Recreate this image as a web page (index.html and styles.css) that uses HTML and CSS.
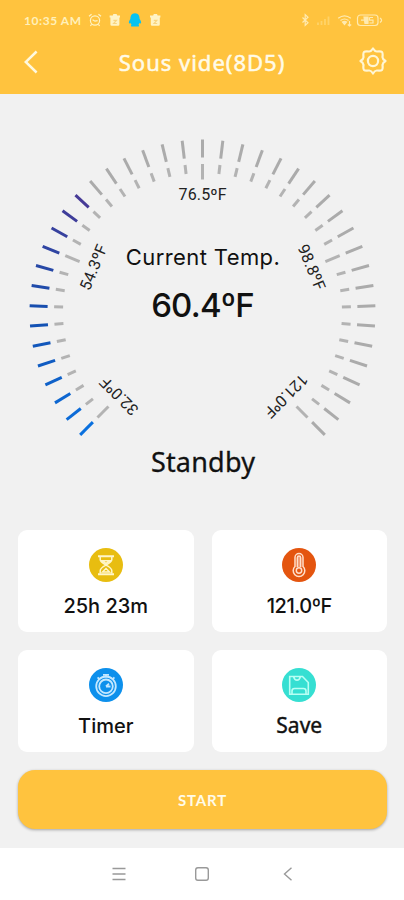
FILE: index.html
```html
<!DOCTYPE html>
<html lang="en">
<head>
<meta charset="utf-8">
<title>Sous vide</title>
<link rel="stylesheet" href="styles.css">
</head>
<body>
<div class="screen">
  <header class="header">
    <div class="status">
      <span class="clock">10:35 AM</span>
      <svg class="status-left" width="76" height="16" viewBox="0 0 76 16" fill="none" stroke="#fff3c4" stroke-width="1.2">
        <circle cx="7" cy="8.5" r="4.6"/><path d="M4.6 7.8 7 9.2l2.6-.6M1 4.3l2.6-2M13 4.3l-2.6-2M3.6 12.4l-1.2 1.4M10.4 12.4l1.2 1.4"/>
        <path fill="#fff3c4" stroke="none" d="M21.600 3.600h3.200l.6-1.600h3.200l.6 1.600h2.800v2H21.600zM22.400 5.400h9v7.100a1.300 1.300 0 0 1-1.300 1.300h-6.400a1.300 1.300 0 0 1-1.300-1.300z"/><path stroke="#f8d480" d="M25.400 8.300h3l-2.800 3.200h3.200"/>
        <path fill="#08c3f2" stroke="none" d="M47 1.200c3.600 0 4.600 2.800 4.600 5.800 1 1.300 1.900 3 1.400 4.300-.3.700-1 .1-1.400-.5-.2 1-.7 1.600-1.200 2 .8.400 1 1.500.1 1.700h-7c-.9-.2-.7-1.300.1-1.700-.5-.4-1-1-1.200-2-.4.600-1.100 1.200-1.400.5-.5-1.300.4-3 1.400-4.300 0-3 1-5.800 4.600-5.800z"/>
        <path fill="#fff3c4" stroke="none" d="M62 3.600h3.200l.6-1.600H69l.6 1.600h2.800v2H62zM62.800 5.400h9v7.100a1.300 1.300 0 0 1-1.300 1.300h-6.400a1.300 1.300 0 0 1-1.300-1.300z"/><path stroke="#f8d480" d="M65.800 8.300h3L66 11.500h3.200"/>
      </svg>
      <svg class="status-right" width="84" height="16" viewBox="0 0 84 16" fill="none" stroke="#ffeab0" stroke-width="1.200">
        <path d="M2.500 5.500 8 10.700 5.200 13.400V2.600L8 5.300 2.500 10.500"/>
        <path stroke="#ffd368" stroke-width="1.800" d="M18 13v-2.500M21.500 13V9M25 13V7M28.500 13V4.500"/>
        <path d="M38.200 6.300q6.300-5 12.600 0M40.500 8.500q4-3 8 0"/><path fill="#ffeab0" d="M42.400 9.900q2.100-1.200 4.200 0l-2.100 2.600z"/><path d="M49.500 9v5M47.800 12.500l1.700 1.500 1.700-1.500"/>
        <rect x="57.500" y="3" width="20.500" height="10.500" rx="3"/><path d="M80 6q3.200 2.200 0 4.500M61 8.200h4"/><path fill="#ffeab0" d="M64 5h4v6.500h-3z"/><path d="M69.500 5.500H73M69.500 5.500v2.700H73V11h-3.500"/>
      </svg>
    </div>
    <div class="titlebar">
      <svg width="14" height="24" viewBox="0 0 14 24" fill="none" stroke="#fff9df" stroke-width="2.500"><path d="M12.600 1.500 1.700 12l10.900 10.500"/></svg>
      <h1 class="title">Sous vide(8D5)</h1>
      <svg class="gear" width="28" height="28" viewBox="0 0 28 28" fill="none" stroke="#fff6d4" stroke-width="2.200" stroke-linejoin="round"><path d="M14 1.500Q16 4.700 18 4.500 22 4 23 5 24 6 23.500 10 23.300 12 26.500 14 23.300 16 23.500 18 24 22 23 23 22 24 18 23.500 16 23.300 14 26.500 12 23.300 10 23.500 6 24 5 23 4 22 4.500 18 4.700 16 1.500 14 4.700 12 4.500 10 4 6 5 5 6 4 10 4.500 12 4.700 14 1.500z"/><circle cx="14" cy="14" r="5.100"/></svg>
    </div>
  </header>

  <main class="main">
    <section class="dial">
      <svg class="gauge" width="404" height="436" viewBox="0 94 404 436">
        <g id="ticks"></g>
        <g class="scale" text-anchor="middle">
          <text transform="translate(202.500 312.500) rotate(-135)" y="-112.500" textLength="47">32.0ºF</text>
          <text transform="translate(202.500 312.500) rotate(-67.500)" y="-112.500" textLength="48">54.3ºF</text>
          <text transform="translate(202.500 312.500)" y="-112.500" textLength="48">76.5ºF</text>
          <text transform="translate(202.500 312.500) rotate(67.500)" y="-112.500" textLength="48">98.8ºF</text>
          <text transform="translate(202.500 312.500) rotate(135)" y="-112.500" textLength="54">121.0ºF</text>
        </g>
      </svg>
      <div class="reading">
        <p class="caption">Current Temp.</p>
        <p class="temp">60.4ºF</p>
        <p class="state">Standby</p>
      </div>
    </section>

    <section class="cards">
      <div class="card">
        <svg class="icon" viewBox="0 0 34 34" fill="none" stroke="#fff6c9" stroke-width="1.500"><circle cx="17" cy="17" r="17" fill="#e8bd10" stroke="none"/><path d="M9 8.200h16M9 26.200h16" stroke-width="2"/><path d="M11.200 9v2.800q0 2 5.800 5.400 5.800-3.400 5.800-5.400V9M11.200 25.500v-2.800q0-2.500 5.800-5.500 5.800 3 5.800 5.500v2.800M13.200 12.800h7.600l-3.800 2.500zM13.500 24l3.500-3.500 3.500 3.500z"/></svg>
        <span class="label">25h 23m</span>
      </div>
      <div class="card">
        <svg class="icon" viewBox="0 0 34 34" fill="none" stroke="#ffe0cc" stroke-width="1.500"><circle cx="17" cy="17" r="17" fill="#e4550f" stroke="none"/><path d="M13 18.500V9.500a4 4 0 0 1 8 0v9a5.800 5.800 0 1 1-8 0z"/><path d="M15.300 19V9.800a1.700 1.700 0 0 1 3.400 0V19" fill="#f09a72"/><circle cx="17" cy="22.500" r="2.700"/></svg>
        <span class="label narrow">121.0ºF</span>
      </div>
      <div class="card">
        <svg class="icon" viewBox="0 0 34 34" fill="none" stroke="#c4e8ff" stroke-width="1.800"><circle cx="17" cy="17" r="17" fill="#0d90ec" stroke="none"/><circle cx="17" cy="18.300" r="9.800"/><circle cx="17" cy="18.300" r="6.800"/><path d="M14 6.800h6M17 7v2.500M8.600 9.400l2.200 2.200M25.400 9.400l-2.200 2.200M17 18.500h4.500M17 18.500l3-2.800"/></svg>
        <span class="label">Timer</span>
      </div>
      <div class="card">
        <svg class="icon" viewBox="0 0 34 34" fill="none" stroke="#b9fff4" stroke-width="1.600"><circle cx="17" cy="17" r="17" fill="#36dfd2" stroke="none"/><path d="M7.700 8.500h12.800l5.800 6v11.700H7.700zM10 26v-3q0-2.500 2.500-2.500h9q2.500 0 2.500 2.500v3M11.500 8.500q1 3.600 3.500 3.600t3.500-3.600"/></svg>
        <span class="label save">Save</span>
      </div>
    </section>

    <button class="start">START</button>
  </main>

  <nav class="nav">
    <svg width="14" height="14" viewBox="0 0 14 14"><path d="M.5 1.500h13M.5 7h13M.5 12.500h13"/></svg>
    <svg class="home" width="16" height="16" viewBox="0 0 16 16"><rect x="1.700" y="1.700" width="12.600" height="12.600" rx="2.200"/></svg>
    <svg width="10" height="14" viewBox="0 0 10 14"><path d="M8.500.8 1.500 7l7 6.200"/></svg>
  </nav>
</div>
<script src="script.js"></script>
</body>
</html>
```
FILE: styles.css
```css
* { box-sizing: border-box; }
body { margin: 0; background: #f1f1f1; font-family: Inter, "Noto Sans", sans-serif; color: #111; }
.screen { width: 404px; height: 900px; display: flex; flex-direction: column; overflow: hidden; }
.header { height: 94px; background: #ffc33e; color: #fffbe8; flex: none; }
.status { height: 40px; display: flex; align-items: center; padding: 0 20px 0 24px; }
.clock { width: 58px; font: 700 12px Lato, sans-serif; letter-spacing: .55px; color: #fff0ba; white-space: nowrap; }
.status-left { margin-left: 6px; }
.status-right { margin-left: auto; }
.titlebar { height: 44px; display: flex; align-items: center; justify-content: space-between; padding: 0 17px 0 24px; }
.title { margin: 0 0 0 7px; font: 400 22px "Noto Sans", sans-serif; letter-spacing: 1px; -webkit-text-stroke: .5px; }
.gear { margin-bottom: 2px; }
.main { flex: 1; }
.dial { display: grid; height: 436px; }
.gauge, .reading { grid-area: 1 / 1; }
.scale { font-family: Roboto, sans-serif; font-size: 16px; fill: #222; }
.reading { text-align: center; padding-top: 146px; }
.reading p { margin: 0; white-space: nowrap; }
.caption { font-size: 22px; line-height: 35px; letter-spacing: .4px; padding-left: 2px; }
.temp { font-size: 33px; font-weight: 500; line-height: 60px; letter-spacing: -.8px; padding-left: 1px; }
.state { font: 400 27px "Noto Sans", sans-serif; letter-spacing: .2px; line-height: 40px; padding: 107px 0 0 2px; -webkit-text-stroke: .3px; }
.cards { display: grid; grid-template-columns: 175.5px 175.5px; gap: 18px; padding: 0 17px 0 18px; }
.card { height: 102px; border-radius: 9px; background: #fff; display: flex; flex-direction: column; align-items: center; padding-top: 18px; }
.icon { width: 34px; height: 34px; }
.label { font-size: 20px; font-weight: 500; line-height: 28px; margin-top: 10px; }
.narrow { letter-spacing: -.5px; }
.save { font-family: "Noto Sans", sans-serif; font-weight: 400; font-size: 21px; margin-top: 9px; -webkit-text-stroke: .4px; }
.start { display: block; width: 369px; height: 59px; margin: 18px 0 0 18px; padding: 0; border: 0; border-radius: 17px; background: #ffc33e; color: #fffbe8; font: 700 15px Lato, sans-serif; letter-spacing: .8px; box-shadow: 0 1px 3px rgba(0, 0, 0, .32); }
.nav { height: 52px; flex: none; background: #fff; display: flex; align-items: center; justify-content: space-between; padding: 0 111px 0 112px; }
.home { margin-right: 5px; }
.nav svg { fill: none; stroke: #999; stroke-width: 1.400; }
```
FILE: script.js
```js
const CX = 202.5, CY = 312.5, STEPS = 40, LIT = 14;
const group = document.getElementById("ticks");

// Interpolates from bright blue through navy to violet over the lit range.
function litColor(i) {
  const stops = [[10, 112, 222], [20, 80, 176], [70, 58, 150]];
  const t = i / (LIT - 1) * 2;
  const s = Math.min(1, Math.floor(t));
  const c = stops[s].map((v, n) => Math.round(v + (stops[s + 1][n] - v) * (t - s)));
  return `rgb(${c.join(",")})`;
}

function tick(angle, outer, inner, color, width) {
  const line = document.createElementNS("http://www.w3.org/2000/svg", "line");
  line.setAttribute("x1", CX);
  line.setAttribute("x2", CX);
  line.setAttribute("y1", CY - outer);
  line.setAttribute("y2", CY - inner);
  line.setAttribute("stroke", color);
  line.setAttribute("stroke-width", width);
  line.setAttribute("transform", `rotate(${angle} ${CX} ${CY})`);
  group.appendChild(line);
}

for (let i = 0; i <= STEPS; i++) {
  const angle = -135 + i * 270 / STEPS;
  tick(angle, 173, 155, i < LIT ? litColor(i) : "#ababab", 3);
  tick(angle, 148.5, i % 10 === 0 ? 133 : 139.5, "#b3b3b3", 3);
}
```
